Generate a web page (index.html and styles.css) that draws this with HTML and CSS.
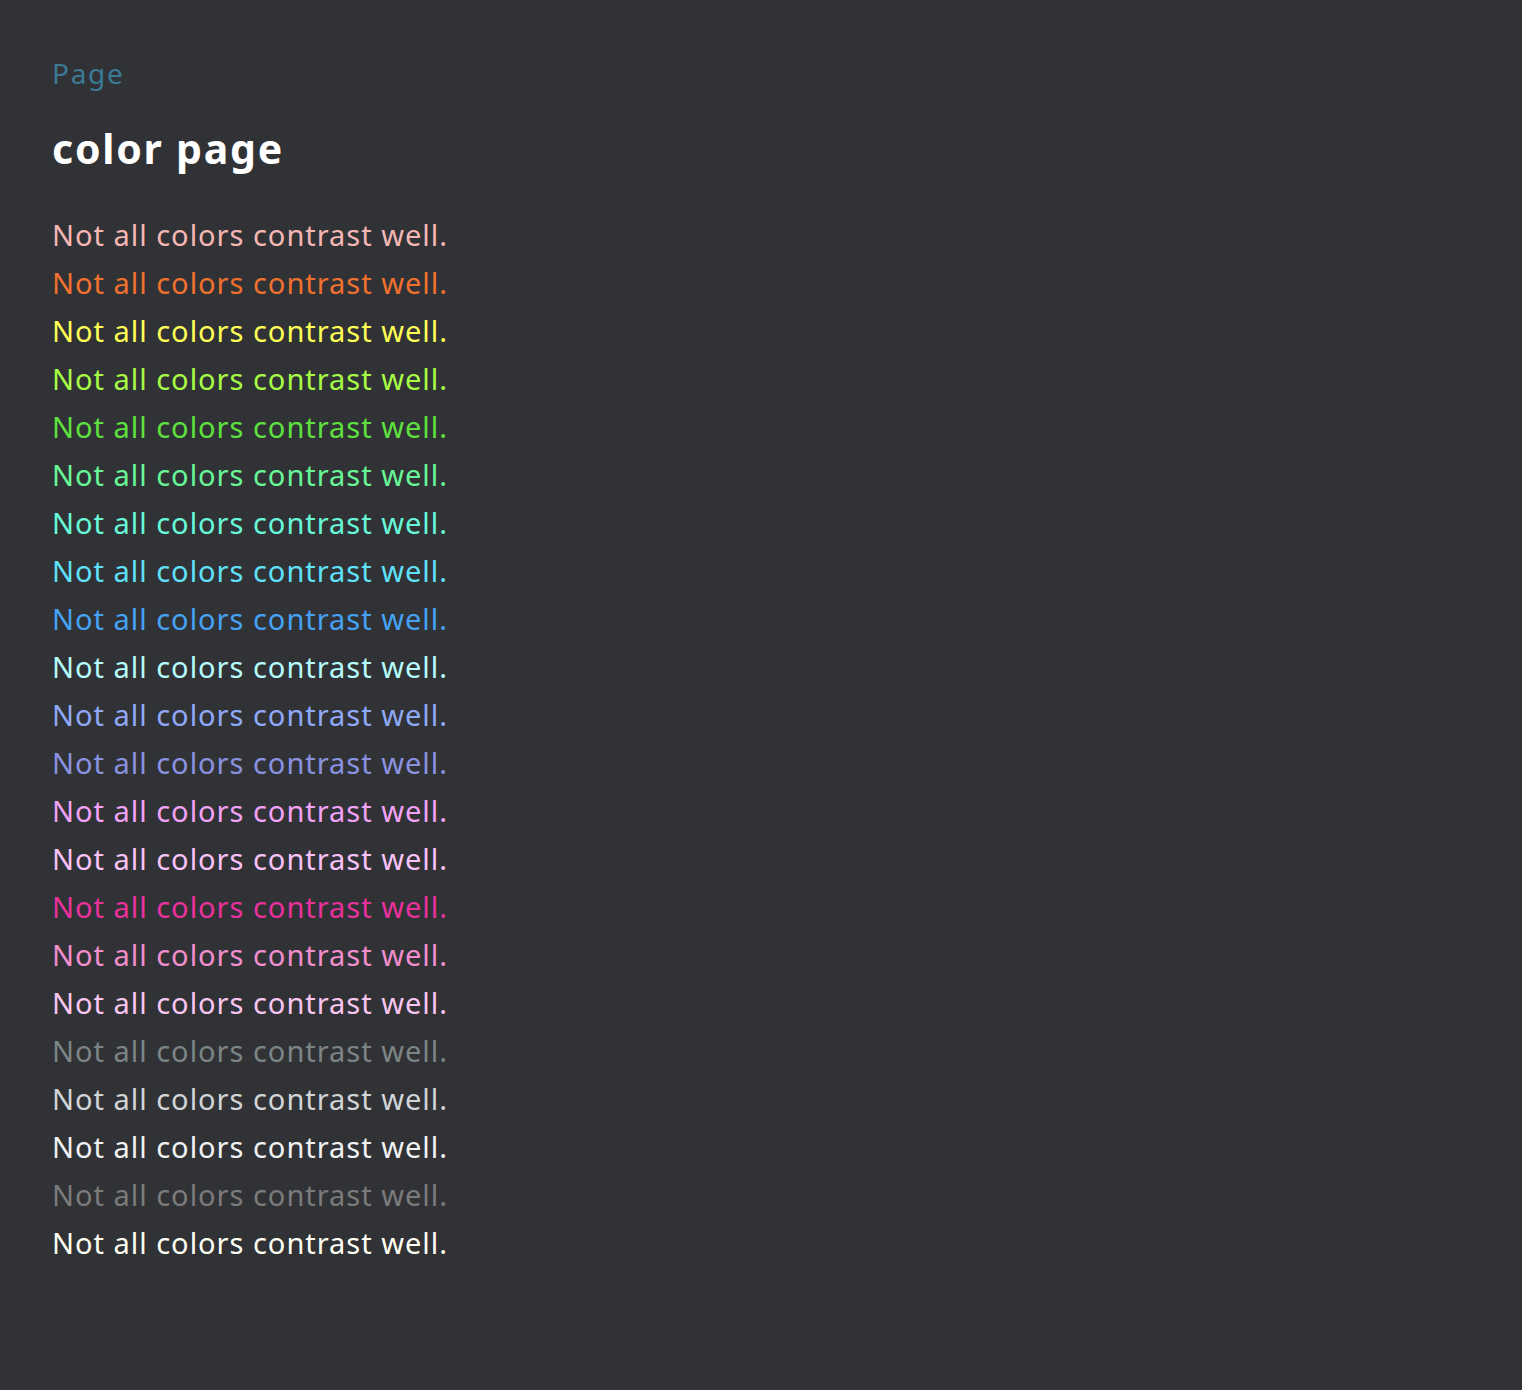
FILE: index.html
```html
<!DOCTYPE html>
<html lang="en">
<head>
<meta charset="utf-8">
<title>color page</title>
<link rel="stylesheet" href="styles.css">
</head>
<body>
<main class="page">
  <div class="crumb">Page</div>
  <h1 class="title">color page</h1>
  <div class="lines">
    <p class="line c1">Not all colors contrast well.</p>
    <p class="line c2">Not all colors contrast well.</p>
    <p class="line c3">Not all colors contrast well.</p>
    <p class="line c4">Not all colors contrast well.</p>
    <p class="line c5">Not all colors contrast well.</p>
    <p class="line c6">Not all colors contrast well.</p>
    <p class="line c7">Not all colors contrast well.</p>
    <p class="line c8">Not all colors contrast well.</p>
    <p class="line c9">Not all colors contrast well.</p>
    <p class="line c10">Not all colors contrast well.</p>
    <p class="line c11">Not all colors contrast well.</p>
    <p class="line c12">Not all colors contrast well.</p>
    <p class="line c13">Not all colors contrast well.</p>
    <p class="line c14">Not all colors contrast well.</p>
    <p class="line c15">Not all colors contrast well.</p>
    <p class="line c16">Not all colors contrast well.</p>
    <p class="line c17">Not all colors contrast well.</p>
    <p class="line c18">Not all colors contrast well.</p>
    <p class="line c19">Not all colors contrast well.</p>
    <p class="line c20">Not all colors contrast well.</p>
    <p class="line c21">Not all colors contrast well.</p>
    <p class="line c22">Not all colors contrast well.</p>
  </div>
</main>
</body>
</html>
```

FILE: styles.css
```css
html, body {
  margin: 0;
  padding: 0;
  background: #313236;
  min-height: 100%;
}
body {
  font-family: "Noto Sans", "Open Sans", sans-serif;
  color: #ffffff;
}
.page {
  padding: 50px 52px 52px;
}
.crumb {
  font-size: 28px;
  line-height: 46px;
  letter-spacing: 1.7px;
  color: #3b7a95;
}
.title {
  margin: 24px 0 0;
  font-size: 41px;
  line-height: 56px;
  font-weight: 700;
  letter-spacing: 1.75px;
  color: #ffffff;
}
.lines {
  margin-top: 35px;
}
.line {
  margin: 0;
  font-size: 29px;
  line-height: 48px;
  letter-spacing: 0.98px;
}
.c1 { color: #f4b7b4; }
.c2 { color: #f0702e; }
.c3 { color: #ffff55; }
.c4 { color: #a7fd45; }
.c5 { color: #5ee03e; }
.c6 { color: #68f697; }
.c7 { color: #67f9d9; }
.c8 { color: #5fe1fa; }
.c9 { color: #45a2f5; }
.c10 { color: #b6fcfc; }
.c11 { color: #8fa9f8; }
.c12 { color: #8a92e0; }
.c13 { color: #f2a2f6; }
.c14 { color: #f9c2f8; }
.c15 { color: #e9319d; }
.c16 { color: #f18ecd; }
.c17 { color: #f9c6f1; }
.c18 { color: #7b8585; }
.c19 { color: #d1d5d8; }
.c20 { color: #f1f2f4; }
.c21 { color: #7b7b7b; }
.c22 { color: #fffff4; }
```
